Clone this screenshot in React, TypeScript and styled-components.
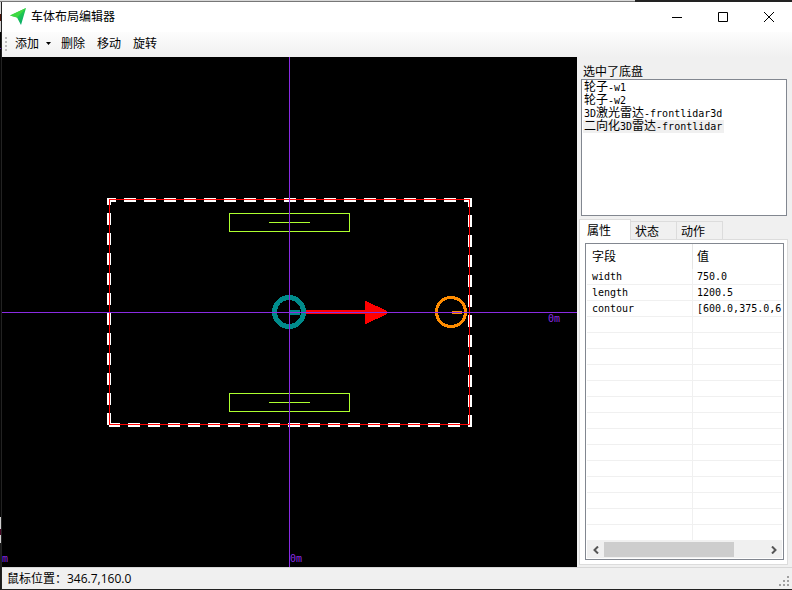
import React, { useState } from "react";
import styled, { createGlobalStyle } from "styled-components";

const UI_FONT = '"Open Sans", "Noto Sans CJK SC", sans-serif';
const MONO_FONT = '"DejaVu Sans Mono", "Noto Sans CJK SC", monospace';

const GlobalStyle = createGlobalStyle`
  * { box-sizing: border-box; }
  body { margin: 0; background: #151515; font-family: ${UI_FONT}; font-size: 12px; color: #000; }
  button { font: inherit; color: inherit; border: 0; padding: 0; margin: 0; background: none; }
`;

const Desktop = styled.div`
  min-height: 100vh;
  display: flex;
  padding: 2px 0 1px 2px;
  background:
    linear-gradient(#777, #777) 0 1px / 635px 1px no-repeat,
    linear-gradient(#d8d8d8, #d8d8d8) 0 0 / 635px 1px no-repeat,
    linear-gradient(#dcdcdc 0 14px, #4a1208 14px 21px, #cfcfcf 21px 32px, #050505 32px 48px, #5a1fb0 48px 49px,
      #050505 49px 517px, #cfcfcf 517px 529px, #4a0828 529px 535px, #cfcfcf 535px 543px, #1b1b1b 543px) 0 0 / 1px 100% no-repeat,
    #222;
`;

const Window = styled.main`
  flex: 1;
  min-width: 0;
  display: flex;
  flex-direction: column;
  background: #f0f0f0;
`;

const TitleBar = styled.header`
  height: 30px;
  display: flex;
  align-items: center;
  background: #fff;
  padding-left: 7px;
`;

const Title = styled.h1`
  flex: 1;
  margin: 0 0 0 2px;
  font-size: 12px;
  line-height: 16px;
  font-weight: 400;
`;

const CaptionButton = styled.button`
  width: 46px;
  height: 30px;
  display: flex;
  align-items: center;
  justify-content: center;
  &:hover { background: #e5e5e5; }
`;

const Toolbar = styled.nav`
  height: 25px;
  display: flex;
  align-items: center;
  gap: 12px;
  padding: 0 3px 2px;
  background: linear-gradient(#fdfdfd, #f0f0f0);
`;

const Grip = styled.svg`
  margin-right: -4px;
`;

const ToolButton = styled.button`
  height: 20px;
  display: flex;
  align-items: center;
  gap: 7px;
  line-height: 16px;
`;

const DropArrow = styled.svg`
  margin-right: -2px;
`;

const Workspace = styled.div`
  flex: 1;
  min-height: 0;
  display: flex;
`;

const Viewport = styled.section`
  flex: 1;
  min-width: 0;
  display: flex;
  background: #000;
`;

const Drawing = styled.svg`
  display: block;
  flex: 1;
  min-width: 0;
  contain: size;
`;

const SidePanel = styled.aside`
  width: 215px;
  flex: none;
  display: flex;
  flex-direction: column;
  padding: 8px 4px 2px 2px;
  font-family: ${MONO_FONT};
`;

const PanelLabel = styled.h2`
  margin: 0 0 0 4px;
  font-size: 12px;
  line-height: 14px;
  font-weight: 400;
`;

const ListBox = styled.ul`
  list-style: none;
  margin: 0 0 3px 2px;
  padding: 1px;
  height: 137px;
  width: 206px;
  border: 1px solid #828790;
  background: #fff;
`;

const ListItem = styled.li`
  display: flex;
`;

const ListChoice = styled.button<{ $active: boolean }>`
  height: 13px;
  padding: 0 2px 0 1px;
  line-height: 13px;
  white-space: nowrap;
  background: ${(p) => (p.$active ? "#f0f0f0" : "transparent")};
`;

const Narrow = styled.span`
  font-size: 10px;
`;

const TabStrip = styled.div`
  display: flex;
  align-items: flex-end;
  height: 20px;
`;

const Tab = styled.button<{ $active: boolean }>`
  width: ${(p) => (p.$active ? 52 : 46)}px;
  height: ${(p) => (p.$active ? 21 : 18)}px;
  margin-bottom: ${(p) => (p.$active ? -1 : 0)}px;
  padding-top: 1px;
  padding-left: ${(p) => (p.$active ? 7 : 4)}px;
  border: 1px solid #dcdcdc;
  border-left-width: ${(p) => (p.$active ? 1 : 0)}px;
  border-bottom: 0;
  background: ${(p) => (p.$active ? "#fff" : "#f0f0f0")};
  text-align: left;
  line-height: 18px;
  z-index: ${(p) => (p.$active ? 1 : 0)};
`;

const TabPane = styled.div`
  flex: 1;
  display: flex;
  flex-direction: column;
  padding: 3px 3px 4px 5px;
  border: 1px solid #dcdcdc;
  background: #fff;
`;

const Grid = styled.div`
  flex: 1;
  display: flex;
  flex-direction: column;
  padding: 0 1px 1px;
  border: 1px solid #828790;
`;

const GridBody = styled.div`
  flex: 1;
  overflow: hidden;
`;

const Table = styled.table`
  width: 100%;
  table-layout: fixed;
  border-collapse: separate;
  border-spacing: 0;
`;

const HeadCell = styled.th<{ $first?: boolean }>`
  width: ${(p) => (p.$first ? "106px" : "auto")};
  height: 25px;
  padding: 2px 0 0 ${(p) => (p.$first ? 5 : 4)}px;
  border-right: ${(p) => (p.$first ? "1px solid #e5e5e5" : "0")};
  text-align: left;
  font-weight: 400;
  font-size: 12px;
  line-height: 23px;
`;

const Cell = styled.td<{ $first?: boolean }>`
  height: 16px;
  padding: 1px 0 0 ${(p) => (p.$first ? 5 : 4)}px;
  border-bottom: 1px solid #f0f0f0;
  border-right: ${(p) => (p.$first ? "1px solid #f0f0f0" : "0")};
  font-size: 10px;
  line-height: 14px;
  white-space: nowrap;
`;

const ScrollBar = styled.div`
  height: 17px;
  display: flex;
  background: #f0f0f0;
`;

const ScrollArrow = styled.button`
  width: 17px;
  display: flex;
  align-items: center;
  justify-content: center;
`;

const Track = styled.div`
  flex: 1;
  display: flex;
  align-items: center;
`;

const Thumb = styled.div`
  width: 81%;
  height: 15px;
  background: #cdcdcd;
`;

const StatusBar = styled.footer`
  height: 22px;
  display: flex;
  align-items: center;
  justify-content: space-between;
  padding: 1px 3px 0 5px;
  border-top: 1px solid #d7d7d7;
  line-height: 16px;
`;

const SizeGrip = styled.svg`
  align-self: flex-end;
  margin-bottom: 3px;
`;

const range = (start: number, end: number, step = 20) => {
  const out: number[] = [];
  for (let v = start; v <= end; v += step) out.push(v);
  return out;
};

/** Narrow Latin glyphs take half the width of a CJK glyph. */
function MixedText({ children }: { children: string }) {
  return (
    <>
      {children.split(/([\x20-\x7e]+)/).map((run, i) =>
        i % 2 ? <Narrow key={i}>{run}</Narrow> : run
      )}
    </>
  );
}

function Selection() {
  return (
    <g fill="#fff">
      <path d="M107 198h9v4h-5v3h-4zM464 198h8v9h-4v-5h-4zM107 413h4v10h9v4h-11v-2h-2z" />
      {range(124, 444).map((x) => <rect key={x} x={x} y={198} width={12} height={4} />)}
      {range(128, 448).map((x) => <rect key={x} x={x} y={423} width={12} height={4} />)}
      {range(213, 393).map((y) => <rect key={y} x={107} y={y} width={4} height={12} />)}
      {range(215, 415).map((y) => <rect key={y} x={468} y={y} width={4} height={12} />)}
    </g>
  );
}

function Wheel({ y }: { y: number }) {
  return (
    <g stroke="#adff2f" fill="none">
      <rect x={229.5} y={y + 0.5} width={120} height={18} />
      <path d={`M269 ${y + 9.5}h41`} />
    </g>
  );
}

function Layout() {
  return (
    <Drawing viewBox="2 57 575 510" preserveAspectRatio="xMidYMid slice" shapeRendering="crispEdges" role="img" aria-label="底盘">
      <Selection />
      <rect x={109.5} y={199.5} width={360} height={225} fill="none" stroke="#f00" />
      <Wheel y={213} />
      <Wheel y={393} />
      <path d="M304 310h61v-9h1l21 10v3l-21 10h-1v-10h-61z" fill="#f00" />
      <circle cx={289} cy={312} r={14.5} fill="none" stroke="#008b8b" strokeWidth={5} />
      <rect x={290} y={310} width={10} height={5} fill="#008b8b" />
      <circle cx={451} cy={312} r={14.5} fill="none" stroke="#ff8c00" strokeWidth={3} />
      <rect x={452} y={311} width={10} height={3} fill="#ff8c00" />
      <path d="M2 312.5h575M289.5 57v510" stroke="#8a2be2" />
      <g fill="#8a2be2" fontFamily={MONO_FONT} fontSize={10}>
        <text x={548} y={322}>0m</text>
        <text x={290} y={562}>0m</text>
        <text x={2} y={562}>m</text>
      </g>
    </Drawing>
  );
}

const parts = ["轮子-w1", "轮子-w2", "3D激光雷达-frontlidar3d", "二向化3D雷达-frontlidar"];
const tabs = ["属性", "状态", "动作"];
const fields = [
  ["width", "750.0"],
  ["length", "1200.5"],
  ["contour", "[600.0,375.0,6"],
];
const rows = [...fields, ...Array.from({ length: 14 }, () => ["", ""])];

export default function App() {
  const [part, setPart] = useState(3);
  const [tab, setTab] = useState(0);
  return (
    <>
      <GlobalStyle />
      <Desktop>
        <Window>
          <TitleBar>
            <svg width="20" height="20" viewBox="0 0 20 20" aria-hidden="true">
              <defs>
                <linearGradient id="plane" x1="0" y1="0" x2="1" y2="1">
                  <stop offset="0.3" stopColor="#35dc3f" />
                  <stop offset="0.8" stopColor="#08ad68" />
                </linearGradient>
              </defs>
              <path d="M17 1 1 8.500l7 2 4 7.500z" fill="url(#plane)" />
              <path d="M17 1 8 10.500 1 8.500z" fill="#3fd943" />
            </svg>
            <Title>车体布局编辑器</Title>
            <CaptionButton aria-label="最小化">
              <svg width="10" height="10"><path d="M0 5.500h10" stroke="#000" /></svg>
            </CaptionButton>
            <CaptionButton aria-label="最大化">
              <svg width="10" height="10"><path d="M.5.5h9v9h-9z" fill="none" stroke="#000" /></svg>
            </CaptionButton>
            <CaptionButton aria-label="关闭">
              <svg width="10" height="10"><path d="m0 0 10 10M10 0 0 10" stroke="#000" /></svg>
            </CaptionButton>
          </TitleBar>
          <Toolbar>
            <Grip width="2" height="14" fill="#bdbdbd" aria-hidden="true">
              <path d="M0 0h2v2H0zM0 4h2v2H0zM0 8h2v2H0zM0 12h2v2H0z" />
            </Grip>
            <ToolButton>
              添加
              <DropArrow width="5" height="3"><path d="M0 0h5L2.500 3z" /></DropArrow>
            </ToolButton>
            <ToolButton>删除</ToolButton>
            <ToolButton>移动</ToolButton>
            <ToolButton>旋转</ToolButton>
          </Toolbar>
          <Workspace>
            <Viewport>
              <Layout />
            </Viewport>
            <SidePanel>
              <PanelLabel id="selected">选中了底盘</PanelLabel>
              <ListBox aria-labelledby="selected">
                {parts.map((name, i) => (
                  <ListItem key={name}>
                    <ListChoice $active={i === part} onClick={() => setPart(i)}>
                      <MixedText>{name}</MixedText>
                    </ListChoice>
                  </ListItem>
                ))}
              </ListBox>
              <TabStrip role="tablist">
                {tabs.map((name, i) => (
                  <Tab key={name} role="tab" aria-selected={i === tab} $active={i === tab} onClick={() => setTab(i)}>
                    {name}
                  </Tab>
                ))}
              </TabStrip>
              <TabPane role="tabpanel">
                <Grid>
                  <GridBody>
                    <Table>
                      <thead>
                        <tr>
                          <HeadCell $first>字段</HeadCell>
                          <HeadCell>值</HeadCell>
                        </tr>
                      </thead>
                      <tbody>
                        {rows.map(([field, value], i) => (
                          <tr key={i}>
                            <Cell $first>{field}</Cell>
                            <Cell>{value}</Cell>
                          </tr>
                        ))}
                      </tbody>
                    </Table>
                  </GridBody>
                  <ScrollBar>
                    <ScrollArrow aria-label="向左">
                      <svg width="6" height="8"><path d="M5 .5 1.500 4 5 7.500" fill="none" stroke="#555" strokeWidth="2" /></svg>
                    </ScrollArrow>
                    <Track><Thumb /></Track>
                    <ScrollArrow aria-label="向右">
                      <svg width="6" height="8"><path d="M1 .5 4.500 4 1 7.500" fill="none" stroke="#555" strokeWidth="2" /></svg>
                    </ScrollArrow>
                  </ScrollBar>
                </Grid>
              </TabPane>
            </SidePanel>
          </Workspace>
          <StatusBar>
            <span>鼠标位置：346.7,160.0</span>
            <SizeGrip width="10" height="10" fill="#a0a0a0" aria-hidden="true">
              <path d="M8 0h2v2H8zM8 4h2v2H8zM4 4h2v2H4zM8 8h2v2H8zM4 8h2v2H4zM0 8h2v2H0z" />
            </SizeGrip>
          </StatusBar>
        </Window>
      </Desktop>
    </>
  );
}
